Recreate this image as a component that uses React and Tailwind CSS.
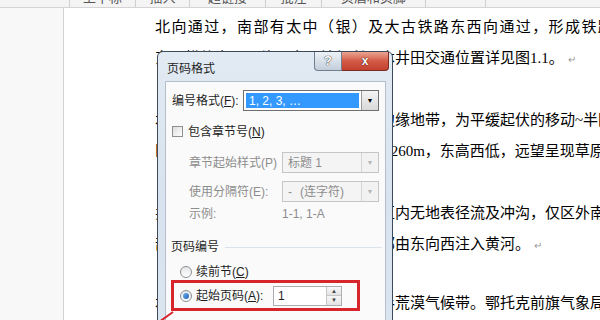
import React from 'react';

// 文档页面 + 「页码格式」对话框（Win7 风格）
const lines = [
  { t: '北向通过，南部有太中（银）及大古铁路东西向通过，形成铁路运输网络。', cls: 'tracking-[1.4px]' },
  { t: '东一横的交通网络，交通较便利。本井田交通位置详见图1.1。', mark: true },
  { t: '' },
  { t: '本井田地处于毛乌素沙漠区的西南边缘地带，为平缓起伏的移动~半固定沙丘。' },
  { t: '区内地势较平坦，海拔高程 1190～1260m，东高西低，远望呈现草原景观。' },
  { t: '' },
  { t: '井田属黄河流域，由于气候干旱，区内无地表径流及冲沟，仅区外南部有都思兔河。' },
  { t: '部有都思兔河流经，该河在区外南部由东向西注入黄河。', mark: true },
  { t: '', h: 'h-[28px]' },
  { t: '本井田气候属于中温带大陆性干旱半荒漠气候带。鄂托克前旗气象局资料。' },
];

const ribbon = [
  { w: 'w-[70px]', t: '' },
  { w: 'w-[66px]', t: '上下标' },
  { w: 'w-[54px]', t: '插入' },
  { w: 'w-[76px]', t: '超链接' },
  { w: 'w-[56px]', t: '批注' },
  { w: 'w-[104px]', t: '页眉和页脚' },
  { w: 'w-[60px]', t: '' },
];

function Radio({ on }) {
  return (
    <span className="w-[12px] h-[12px] rounded-full border border-[#8a8f96] bg-gradient-to-b from-[#e6e6e6] to-[#ffffff] flex items-center justify-center shrink-0">
      {on && <span className="w-[6px] h-[6px] rounded-full bg-gradient-to-br from-[#6fb2f0] to-[#1a5fb4]" />}
    </span>
  );
}

function Combo({ value, width, disabled, selected }) {
  return (
    <div className={`${width} h-[21px] flex border ${disabled ? 'border-[#c5c5c5] bg-[#f4f4f4]' : 'border-[#6f6f6f] bg-white'}`}>
      <div className="flex-1 p-[2px] flex">
        <div className={`flex-1 flex items-center pl-[3px] ${selected ? 'bg-[#3399ff] text-white' : 'text-[#8d8d8d]'}`}>
          {value}
        </div>
      </div>
      <div className={`w-[17px] flex items-center justify-center border-l ${disabled ? 'border-[#d5d5d5] bg-[#f2f2f2]' : 'border-[#9a9a9a] bg-gradient-to-b from-[#f4f4f4] to-[#d9d9d9]'}`}>
        <span className={`text-[7px] leading-none ${disabled ? 'text-[#b5b5b5]' : 'text-black'}`}>▼</span>
      </div>
    </div>
  );
}

export default function App() {
  return (
    <div className="w-[600px] h-[320px] relative overflow-hidden bg-white">
      {/* 功能区底边 */}
      <div className="h-[8px] bg-[#f4f4f4] border-b border-[#d4d4d4] overflow-hidden flex font-['Liberation_Sans','Noto_Sans_CJK_SC',sans-serif] text-[13px] text-[#555] leading-[16px]">
        {ribbon.map((r, i) => (
          <div key={i} className={`${r.w} -mt-[10px] flex justify-center border-r border-[#cfcfcf]`}>{r.t}</div>
        ))}
      </div>

      <div className="flex h-[312px]">
        <div className="w-[64px] bg-[#f8f8f8] border-r border-[#d2d2d2]" />
        <div className="flex-1 pl-[91px] pt-[4px] overflow-hidden font-['Liberation_Serif','Noto_Sans_CJK_SC',serif] text-[15px] text-black">
          {lines.map((l, i) => (
            <div key={i} className={`${l.h || 'h-[31px]'} leading-[31px] whitespace-nowrap ${l.cls || ''}`}>
              {l.t}
              {l.mark && <span className="text-[10px] text-[#9a9a9a] ml-[4px]">↵</span>}
            </div>
          ))}
        </div>
      </div>

      {/* 页码格式 对话框 */}
      <div className="absolute left-[157px] top-[51px] w-[236px] h-[290px] border border-[#3c4a5c] rounded-t-[6px] bg-gradient-to-b from-[#e2eaf3] via-[#d8e3ef] to-[#dbe5f0] font-['Liberation_Sans','Noto_Sans_CJK_SC',sans-serif] text-[12px] leading-[16px] text-[#1e1e1e]">
        <div className="h-[29px] flex items-start">
          <div className="pl-[9px] pt-[9px] flex-1">页码格式</div>
          <div className="flex mr-[3px]">
            <div className="w-[28px] h-[19px] rounded-bl-[4px] border border-t-0 border-[#707e90] bg-gradient-to-b from-[#eef2f7] to-[#c3cedb] flex items-center justify-center text-[13px] font-bold text-white [text-shadow:0_0_1px_#333,0_0_1px_#333]">?</div>
            <div className="w-[47px] h-[19px] rounded-br-[4px] border border-t-0 border-l-0 border-[#7a2b22] bg-gradient-to-b from-[#e9a392] via-[#d35a45] to-[#c4402e] flex items-center justify-center text-[12px] font-bold text-white [text-shadow:0_0_1px_#3a0c06,0_0_1px_#3a0c06]">x</div>
          </div>
        </div>

        <div className="ml-[7px] mr-[6px] h-[260px] border border-[#b3bfcc] bg-[#fafafa] relative">
          {/* 编号格式 */}
          <div className="mt-[8px] flex items-center pl-[6px]">
            <span className="w-[71px]">编号格式(<span className="underline">F</span>):</span>
            <Combo width="w-[136px]" value="1, 2, 3, …" selected />
          </div>

          {/* 包含章节号 */}
          <div className="mt-[14px] flex items-center gap-[5px] pl-[6px] h-[13px]">
            <span className="w-[11px] h-[11px] border border-[#8e8f8f] bg-gradient-to-br from-[#dcdcdc] to-white" />
            <span>包含章节号(<span className="underline">N</span>)</span>
          </div>

          <div className="mt-[14px] flex items-center pl-[23px] text-[#8d8d8d]">
            <span className="w-[93px]">章节起始样式(P)</span>
            <Combo width="w-[97px]" value="标题 1" disabled />
          </div>

          <div className="mt-[8px] flex items-center pl-[23px] text-[#8d8d8d]">
            <span className="w-[93px]">使用分隔符(E):</span>
            <Combo width="w-[97px]" value={<span className="flex gap-[8px]"><span>-</span><span>(连字符)</span></span>} disabled />
          </div>

          <div className="mt-[4px] flex items-center pl-[23px] text-[#8d8d8d]">
            <span className="w-[93px]">示例:</span>
            <span>1-1, 1-A</span>
          </div>

          {/* 页码编号 */}
          <div className="mt-[17px] flex items-center pl-[5px]">
            <span>页码编号</span>
            <span className="flex-1 h-px bg-[#dde3ea] ml-[6px] mr-[3px]" />
          </div>

          <div className="mt-[9px] flex items-center gap-[4px] pl-[14px]">
            <Radio />
            <span>续前节(<span className="underline">C</span>)</span>
          </div>

          <div className="ml-[5px] w-[189px] h-[31px] border-[3px] border-[#d8252b] flex items-center pl-[6px]">
            <Radio on />
            <span className="ml-[4px] w-[77px]">起始页码(<span className="underline">A</span>):</span>
            <div className="w-[69px] h-[20px] border border-[#abadb3] bg-white flex">
              <span className="flex-1 pl-[4px] leading-[18px]">1</span>
              <div className="w-[15px] flex flex-col border-l border-[#c6c6c6]">
                <span className="flex-1 flex items-center justify-center text-[6px] leading-none text-[#444] bg-gradient-to-b from-[#f7f7f7] to-[#e3e3e3] border-b border-[#c6c6c6]">▲</span>
                <span className="flex-1 flex items-center justify-center text-[6px] leading-none text-[#444] bg-gradient-to-b from-[#f7f7f7] to-[#e3e3e3]">▼</span>
              </div>
            </div>
          </div>
        </div>
      </div>

      {/* 标注箭头线 */}
      <svg className="absolute left-[150px] top-[305px]" width="30" height="20">
        <line x1="23" y1="7" x2="9" y2="17" stroke="#d8252b" strokeWidth="2" />
      </svg>
    </div>
  );
}
